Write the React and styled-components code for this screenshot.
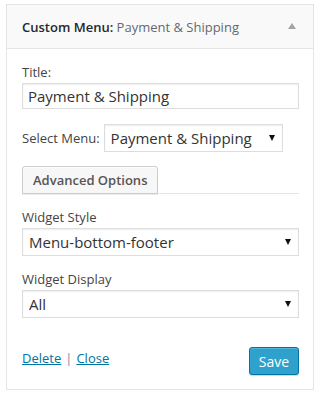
import React from "react";
import styled, { createGlobalStyle } from "styled-components";

const GlobalStyle = createGlobalStyle`
  body {
    margin: 0;
    background: #fff;
    font-family: "Open Sans", "Liberation Sans", sans-serif;
    color: #444;
  }
`;

const Page = styled.div`
  padding: 4px 0 0 6px;
`;

const Widget = styled.div`
  width: 306px;
  border: 1px solid #e5e5e5;
  background: #fff;
  box-shadow: 0 1px 1px rgba(0, 0, 0, 0.04);
`;

const Header = styled.div`
  height: 43px;
  display: flex;
  align-items: center;
  justify-content: space-between;
  padding: 0 17px 0 15px;
  background: #f9f9f9;
  border-bottom: 1px solid #e5e5e5;
`;

const Heading = styled.h3`
  margin: 0;
  font-size: 13px;
  font-weight: 600;
  color: #23282d;
  white-space: nowrap;
`;

const InTitle = styled.span`
  font-weight: 400;
  color: #646970;
`;

const Toggle = styled.span`
  width: 0;
  height: 0;
  border-left: 4px solid transparent;
  border-right: 4px solid transparent;
  border-bottom: 6px solid #a0a5aa;
  margin-top: -1px;
`;

const Body = styled.div`
  padding: 14px 14px 14px 15px;
`;

const Field = styled.div`
  display: flex;
  flex-direction: column;
  gap: 2px;
  margin-bottom: ${(p) => p.$mb || 0}px;
`;

const InlineField = styled.div`
  display: flex;
  align-items: center;
  gap: 4px;
  margin-bottom: 14px;
`;

const Label = styled.label`
  font-size: 13px;
  line-height: 18px;
  color: #444;
`;

const TextInput = styled.input`
  box-sizing: border-box;
  width: 277px;
  height: 26px;
  margin: 0;
  padding: 0 5px;
  border: 1px solid #ddd;
  box-shadow: inset 0 1px 2px rgba(0, 0, 0, 0.07);
  font-family: inherit;
  font-size: 15px;
  color: #333;
  outline: none;
`;

const SelectWrap = styled.div`
  position: relative;
  width: ${(p) => p.$w}px;
`;

const Select = styled.select`
  box-sizing: border-box;
  width: 100%;
  height: 28px;
  margin: 0;
  padding: 0 20px 0 6px;
  border: 1px solid #ddd;
  border-radius: 0;
  background: #fff;
  box-shadow: inset 0 1px 2px rgba(0, 0, 0, 0.07);
  appearance: none;
  font-family: inherit;
  font-size: 15px;
  color: #333;
  outline: none;
`;

const Caret = styled.span`
  position: absolute;
  right: 8px;
  top: 11px;
  width: 0;
  height: 0;
  border-left: 3px solid transparent;
  border-right: 3px solid transparent;
  border-top: 6px solid #111;
  pointer-events: none;
`;

const TabBar = styled.div`
  width: 277px;
  display: flex;
  border-bottom: 1px solid #e5e5e5;
  margin-bottom: 14px;
`;

const TabButton = styled.button`
  box-sizing: border-box;
  height: 28px;
  padding: 0 10px;
  margin: 0 0 -1px;
  border: 1px solid #ccc;
  border-radius: 3px 3px 0 0;
  background: #f7f7f7;
  box-shadow: inset 0 1px 0 #fff, 0 1px 0 rgba(0, 0, 0, 0.08);
  font-family: inherit;
  font-size: 13px;
  font-weight: 600;
  color: #555;
  cursor: pointer;
`;

const Footer = styled.div`
  display: flex;
  justify-content: space-between;
  align-items: flex-start;
  width: 277px;
  margin-top: 29px;
`;

const Links = styled.div`
  font-size: 13px;
  line-height: 18px;
  margin-top: 2px;
  color: #8c8f94;
`;

const Link = styled.a`
  color: #0074a2;
  text-decoration: underline;
`;

const Sep = styled.span`
  margin: 0 4px;
  color: #8a84a6;
`;

const SaveButton = styled.button`
  box-sizing: border-box;
  width: 50px;
  height: 28px;
  padding: 0;
  border: 1px solid #0074a2;
  border-radius: 3px;
  background: #2ea2cc;
  box-shadow: inset 0 1px 0 rgba(120, 200, 230, 0.5), 0 1px 0 rgba(0, 0, 0, 0.15);
  font-family: inherit;
  font-size: 14px;
  color: #fff;
  cursor: pointer;
`;

function Dropdown({ width, value, options }) {
  return (
    <SelectWrap $w={width}>
      <Select defaultValue={value}>
        {options.map((o) => (
          <option key={o}>{o}</option>
        ))}
      </Select>
      <Caret />
    </SelectWrap>
  );
}

export default function App() {
  return (
    <Page>
      <GlobalStyle />
      <Widget>
        <Header>
          <Heading>
            Custom Menu: <InTitle>Payment &amp; Shipping</InTitle>
          </Heading>
          <Toggle />
        </Header>
        <Body>
          <Field $mb={15}>
            <Label>Title:</Label>
            <TextInput defaultValue="Payment & Shipping" />
          </Field>

          <InlineField>
            <Label>Select Menu:</Label>
            <Dropdown width={179} value="Payment & Shipping" options={["Payment & Shipping", "Main Menu"]} />
          </InlineField>

          <TabBar>
            <TabButton>Advanced Options</TabButton>
          </TabBar>

          <Field $mb={14}>
            <Label>Widget Style</Label>
            <Dropdown width={277} value="Menu-bottom-footer" options={["Menu-bottom-footer", "Default"]} />
          </Field>

          <Field>
            <Label>Widget Display</Label>
            <Dropdown width={277} value="All" options={["All", "Desktop", "Mobile"]} />
          </Field>

          <Footer>
            <Links>
              <Link href="#delete">Delete</Link>
              <Sep>|</Sep>
              <Link href="#close">Close</Link>
            </Links>
            <SaveButton>Save</SaveButton>
          </Footer>
        </Body>
      </Widget>
    </Page>
  );
}
